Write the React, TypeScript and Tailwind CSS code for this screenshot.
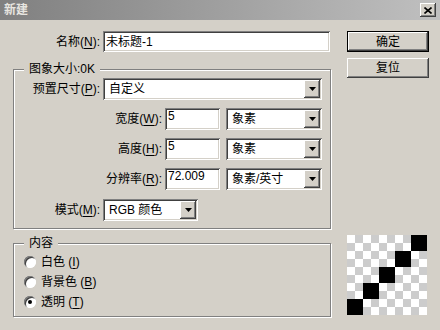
const sunken =
  "bg-white shadow-[inset_1px_1px_0_#808080,inset_-1px_-1px_0_#ffffff,inset_2px_2px_0_#404040,inset_-2px_-2px_0_#d4d0c8]";
const raised =
  "bg-[#d4d0c8] shadow-[inset_-1px_-1px_0_#404040,inset_1px_1px_0_#ffffff,inset_-2px_-2px_0_#808080,inset_2px_2px_0_#d4d0c8]";

type Key = { text: string; k: string; suffix?: string };

const Label = ({ text, k, suffix = ":" }: Key) => (
  <span className="whitespace-nowrap">
    {text}(<span className="underline underline-offset-2">{k}</span>){suffix}
  </span>
);

const Arrow = () => (
  <div className={`${raised} w-[16px] h-full flex items-center justify-center`}>
    <svg width="7" height="4" viewBox="0 0 7 4">
      <path d="M0 0h7L3.5 4z" fill="#000" />
    </svg>
  </div>
);

const Select = ({ value, w }: { value: string; w: string }) => (
  <div className={`${sunken} ${w} h-[22px] flex items-stretch p-[2px]`}>
    <div className="flex-1 flex items-center pl-[4px] whitespace-nowrap">{value}</div>
    <Arrow />
  </div>
);

const Input = ({
  value,
  w,
  h = "h-[22px]",
  top,
}: {
  value: string;
  w: string;
  h?: string;
  top?: boolean;
}) => (
  <div
    className={`${sunken} ${w} ${h} flex pl-[3px] ${top ? "items-start pt-[1px] leading-[14px]" : "items-center"}`}
  >
    {value}
  </div>
);

const Group = ({
  legend,
  h,
  children,
}: {
  legend: string;
  h: string;
  children: React.ReactNode;
}) => (
  <div
    className={`relative ${h} border border-[#808080] shadow-[1px_1px_0_#ffffff,inset_1px_1px_0_#ffffff]`}
  >
    <span className="absolute -top-[9px] left-[10px] bg-[#d4d0c8] px-[5px] leading-[16px]">
      {legend}
    </span>
    {children}
  </div>
);

const Radio = ({ checked, text, k }: { checked?: boolean; text: string; k: string }) => (
  <div className="flex items-center h-[20px] pl-[10px]">
    <div className="w-[12px] h-[12px] rounded-full bg-white shadow-[inset_1px_1px_0_#808080,inset_-1px_-1px_0_#ffffff,inset_2px_2px_0_#404040] flex items-center justify-center">
      {checked && <div className="w-[4px] h-[4px] rounded-full bg-black" />}
    </div>
    <span className="ml-[5px]">
      {text} (<span className="underline underline-offset-2">{k}</span>)
    </span>
  </div>
);

const Checker = () => {
  const cells = [];
  for (let r = 0; r < 10; r++)
    for (let c = 0; c < 10; c++)
      if ((r + c) % 2 === 1)
        cells.push(<rect key={`${r}-${c}`} x={c * 8} y={r * 8} width="8" height="8" fill="#cccccc" />);
  return (
    <svg width="80" height="80" viewBox="0 0 80 80">
      <rect width="80" height="80" fill="#fff" />
      {cells}
      {[0, 1, 2, 3, 4].map((i) => (
        <rect key={i} x={64 - i * 16} y={i * 16} width="16" height="16" fill="#000" />
      ))}
    </svg>
  );
};

const Button = ({ text, isDefault, h }: { text: string; isDefault?: boolean; h: string }) => (
  <div className={`${isDefault ? "border border-black" : ""} ${h} w-[82px] flex`}>
    <div className={`${raised} flex-1 flex items-center justify-center`}>{text}</div>
  </div>
);

export default function App() {
  return (
    <div className="w-[440px] h-[330px] overflow-hidden bg-[#d4d0c8] text-black text-[12px] font-['Liberation_Sans','Noto_Sans_CJK_SC',sans-serif]">
      <div className="h-[20px] bg-gradient-to-r from-[#808080] to-[#c0c0c0] flex items-center justify-between pl-[4px] pr-[4px]">
        <span className="font-bold text-[#e8e6e0]">新建</span>
        <div className={`${raised} w-[16px] h-[14px] flex items-center justify-center`}>
          <svg width="8" height="7" viewBox="0 0 8 7">
            <path d="M0.5 0.5l7 6M7.5 0.5l-7 6" stroke="#000" strokeWidth="1.6" />
          </svg>
        </div>
      </div>

      <div className="flex pl-[13px] pt-[11px]">
        <div className="w-[318px]">
          <div className="flex items-center">
            <div className="w-[87px] flex justify-end">
              <Label text="名称" k="N" />
            </div>
            <Input value="未标题-1" w="w-[227px] ml-[3px]" h="h-[21px]" />
          </div>

          <div className="mt-[17px]">
            <Group legend="图象大小:0K" h="h-[160px]">
              <div className="pt-[8px]">
                <div className="flex items-center">
                  <div className="w-[86px] flex justify-end">
                    <Label text="预置尺寸" k="P" />
                  </div>
                  <div className="ml-[3px]">
                    <Select value="自定义" w="w-[219px]" />
                  </div>
                </div>

                {[
                  { t: "宽度", k: "W", v: "5", u: "象素" },
                  { t: "高度", k: "H", v: "5", u: "象素" },
                  { t: "分辨率", k: "R", v: "72.009", u: "象素/英寸" },
                ].map((row) => (
                  <div key={row.k} className="flex items-center mt-[8px]">
                    <div className="w-[148px] flex justify-end">
                      <Label text={row.t} k={row.k} />
                    </div>
                    <Input value={row.v} w="w-[55px] ml-[3px]" top />
                    <div className="ml-[6px]">
                      <Select value={row.u} w="w-[96px]" />
                    </div>
                  </div>
                ))}

                <div className="flex items-center mt-[9px]">
                  <div className="w-[86px] flex justify-end">
                    <Label text="模式" k="M" />
                  </div>
                  <div className="ml-[3px]">
                    <Select value="RGB 颜色" w="w-[95px]" />
                  </div>
                </div>
              </div>
            </Group>
          </div>

          <div className="mt-[14px]">
            <Group legend="内容" h="h-[74px]">
              <div className="pt-[8px]">
                <Radio text="白色" k="I" />
                <Radio text="背景色" k="B" />
                <Radio text="透明" k="T" checked />
              </div>
            </Group>
          </div>
        </div>

        <div className="ml-[16px] flex flex-col">
          <Button text="确定" isDefault h="h-[21px]" />
          <div className="mt-[6px]">
            <Button text="复位" h="h-[20px]" />
          </div>
          <div className="mt-[157px]">
            <Checker />
          </div>
        </div>
      </div>
    </div>
  );
}
